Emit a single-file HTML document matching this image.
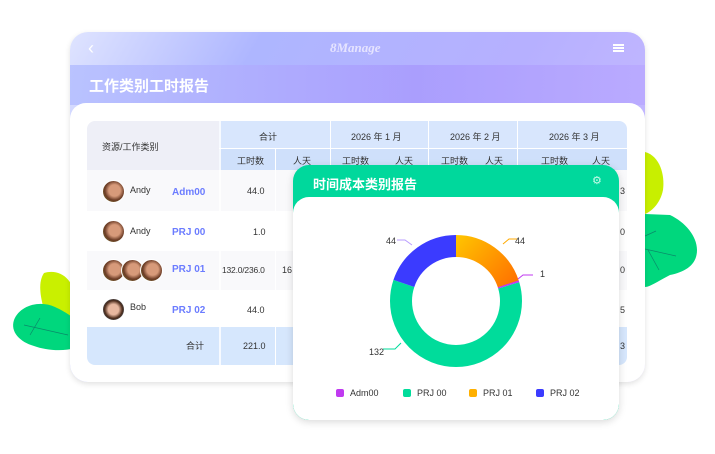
<!DOCTYPE html>
<html><head><meta charset="utf-8">
<style>
*{margin:0;padding:0;box-sizing:border-box}
body{width:715px;height:454px;background:#fff;position:relative;overflow:hidden;font-family:"Liberation Sans","Noto Sans CJK SC",sans-serif;}
.a{position:absolute}
.card{left:70px;top:32px;width:575px;height:350px;border-radius:18px;overflow:hidden;background:linear-gradient(120deg,#dfe4ff 0%,#aeb6ff 25%,#b6b0ff 60%,#c4b8ff 85%,#dcd2ff 100%);box-shadow:0 2px 6px rgba(0,0,0,.12)}
.band{left:0;top:33px;width:575px;height:40px;background:linear-gradient(90deg,#b6c0ff,#a99cfd 60%,#b9a9ff);opacity:.9}
.panel{left:0;top:71px;width:575px;height:290px;background:#fff;border-radius:16px 16px 0 0}
.t{font-size:9px;color:#333;white-space:nowrap}
.av{width:23px;height:23px;border-radius:50%;background:radial-gradient(circle at 55% 45%,#d79a7a 0 35%,#6b3b25 60%,#7a8a3a 100%);border:1px solid #fff}
.lk{color:#6b7cff;font-weight:bold;font-size:10px}
</style></head><body>
<svg class="a" style="left:0;top:0" width="715" height="454">
<path d="M44 273 C60 268 75 280 75 300 L75 330 C62 332 48 325 44 310 C40 295 38 282 44 273Z" fill="#c9f000"/>
<path d="M14 320 C20 305 40 300 55 307 C66 312 74 318 75 320 L75 348 C62 352 45 350 34 346 C20 342 10 332 14 320Z" fill="#00d77d"/>
<path d="M24 325 L68 335 M40 318 L30 335" stroke="#0a8a6a" stroke-width=".7" fill="none"/>
<path d="M645 152 C660 156 665 175 663 190 C660 205 650 212 645 214Z" fill="#c8ef00"/>
<path d="M645 214 L670 215 C685 222 697 236 697 250 C697 265 685 272 670 275 C660 280 650 287 645 287Z" fill="#00d77d"/>
<path d="M645 249 L676 256 M645 236 L656 231 M648 250 L659 270" stroke="#0a8a6a" stroke-width=".7" fill="none"/>
</svg>
<div class="a card">
 <div class="a band"></div>
 <div class="a" style="left:18px;top:6px;color:#fff;font-size:18px">&#x2039;</div>
 <div class="a" style="left:260px;top:8px;color:#e6e4ff;font-size:13px;font-style:italic;font-weight:bold;font-family:'Liberation Serif',serif">8Manage</div>
 <div class="a" style="left:543px;top:12px;width:11px;height:2px;background:#fff;box-shadow:0 3px 0 #fff,0 6px 0 #fff"></div>
 <div class="a" style="left:19px;top:43px;color:#fff;font-size:15px;font-weight:bold">工作类别工时报告</div>
 <div class="a panel"></div>
</div>
<div class="a" style="left:87px;top:121px;width:540px;height:244px;border-radius:8px;overflow:hidden;background:#fff">
 <div class="a" style="left:0;top:0;width:132px;height:49px;background:#eeeff7"></div>
 <div class="a" style="left:132px;top:0;width:408px;height:49px;background:#d8e6fd"></div>
 <div class="a" style="left:132px;top:27px;width:408px;height:22px;background:#cfe0fb"></div>
 <div class="a" style="left:0;top:49px;width:540px;height:41px;background:#f9f9fb"></div>
 <div class="a" style="left:0;top:130px;width:540px;height:39px;background:#f9f9fb"></div>
 <div class="a" style="left:0;top:206px;width:540px;height:38px;background:#d6e7fd"></div>
 <div class="a" style="left:132px;top:0;width:2px;height:244px;background:#fff;opacity:.8"></div>
 <div class="a" style="left:188px;top:27px;width:1px;height:217px;background:#fff"></div>
 <div class="a" style="left:243px;top:0;width:1px;height:244px;background:#fff"></div>
 <div class="a" style="left:341px;top:0;width:1px;height:49px;background:#fff"></div>
 <div class="a" style="left:430px;top:0;width:1px;height:49px;background:#fff"></div>
 <div class="a" style="left:132px;top:27px;width:408px;height:1px;background:#fff"></div>
</div>
<div class="a t" style="left:102px;top:140px">资源/工作类别</div>
<div class="a t" style="left:259px;top:130px">合计</div>
<div class="a t" style="left:351px;top:130px">2026 年 1 月</div>
<div class="a t" style="left:450px;top:130px">2026 年 2 月</div>
<div class="a t" style="left:549px;top:130px">2026 年 3 月</div>
<div class="a t" style="left:237px;top:154px">工时数</div>
<div class="a t" style="left:293px;top:154px">人天</div>
<div class="a t" style="left:342px;top:154px">工时数</div>
<div class="a t" style="left:395px;top:154px">人天</div>
<div class="a t" style="left:441px;top:154px">工时数</div>
<div class="a t" style="left:485px;top:154px">人天</div>
<div class="a t" style="left:541px;top:154px">工时数</div>
<div class="a t" style="left:592px;top:154px">人天</div>

<div class="a av" style="left:102px;top:180px"></div><div class="a t" style="left:130px;top:185px">Andy</div><div class="a lk" style="left:172px;top:187px">Adm00</div><div class="a t" style="left:247px;top:186px">44.0</div>
<div class="a av" style="left:102px;top:220px"></div><div class="a t" style="left:130px;top:226px">Andy</div><div class="a lk" style="left:172px;top:227px">PRJ 00</div><div class="a t" style="left:253px;top:227px">1.0</div>
<div class="a av" style="left:102px;top:259px"></div><div class="a av" style="left:121px;top:259px"></div><div class="a av" style="left:140px;top:259px"></div><div class="a lk" style="left:172px;top:264px">PRJ 01</div><div class="a t" style="left:222px;top:265px;font-size:8.5px;letter-spacing:-.2px">132.0/236.0</div><div class="a t" style="left:282px;top:265px">16</div>
<div class="a av" style="left:102px;top:298px;background:radial-gradient(circle at 50% 50%,#e8b8a0 0 35%,#4a2a1a 60%,#4a8ab0 100%)"></div><div class="a t" style="left:130px;top:302px">Bob</div><div class="a lk" style="left:172px;top:305px">PRJ 02</div><div class="a t" style="left:247px;top:305px">44.0</div>
<div class="a t" style="left:186px;top:339px">合计</div><div class="a t" style="left:243px;top:341px">221.0</div>

<div class="a" style="left:293px;top:165px;width:326px;height:255px;border-radius:16px;background:#00d89c;overflow:hidden;box-shadow:0 2px 8px rgba(0,0,0,.15)">
 <div class="a" style="left:20px;top:9px;color:#fff;font-size:13px;font-weight:bold">时间成本类别报告</div>
 <div class="a" style="left:299px;top:9px;color:#c8fbe9;font-size:11px">⚙</div>
 <div class="a" style="left:0;top:32px;width:326px;height:223px;background:#fff;border-radius:16px"></div>
</div>
<svg class="a" style="left:293px;top:165px" width="326" height="255">
 <defs><linearGradient id="og" gradientUnits="userSpaceOnUse" x1="165" y1="70" x2="225" y2="125"><stop offset="0" stop-color="#ffc400"/><stop offset="1" stop-color="#ff6a00"/></linearGradient></defs>
 <path d="M163 81 A55 55 0 0 1 215.3 119 " fill="none" stroke="url(#og)" stroke-width="22"/>
 <g transform="translate(163,136) rotate(-90)">
  <circle r="55" fill="none" stroke="#00dc9b" stroke-width="22" stroke-dasharray="206.4 345.6" stroke-dashoffset="-70.4"/>
  <circle r="55" fill="none" stroke="#3b3bff" stroke-width="22" stroke-dasharray="68.8 345.6" stroke-dashoffset="-276.8"/>
  <circle r="55" fill="none" stroke="#c03af0" stroke-width="22" stroke-dasharray="1.6 345.6" stroke-dashoffset="-68.8"/>
 </g>
 <path d="M119 80 L112 75 L104 75" stroke="#b99cff" fill="none"/>
 <path d="M210 79 L216 74 L224 74" stroke="#ffaa00" fill="none"/>
 <path d="M225 114 L230 110 L240 110" stroke="#c03af0" fill="none"/>
 <path d="M108 178 L102 184 L90 184" stroke="#00dc9b" fill="none"/>
 <g font-size="9" fill="#333" font-family="Liberation Sans,sans-serif">
  <text x="93" y="79">44</text><text x="222" y="79">44</text><text x="247" y="112">1</text><text x="76" y="190">132</text>
  <rect x="43" y="224" width="8" height="8" rx="2" fill="#c03af0"/><text x="57" y="231">Adm00</text>
  <rect x="110" y="224" width="8" height="8" rx="2" fill="#00dc9b"/><text x="124" y="231">PRJ 00</text>
  <rect x="176" y="224" width="8" height="8" rx="2" fill="#ffb000"/><text x="190" y="231">PRJ 01</text>
  <rect x="243" y="224" width="8" height="8" rx="2" fill="#3b3bff"/><text x="257" y="231">PRJ 02</text>
 </g>
</svg>
<div class="a t" style="left:620px;top:186px">3</div>
<div class="a t" style="left:620px;top:227px">0</div>
<div class="a t" style="left:620px;top:265px">0</div>
<div class="a t" style="left:620px;top:305px">5</div>
<div class="a t" style="left:620px;top:341px">3</div>
</body></html>
